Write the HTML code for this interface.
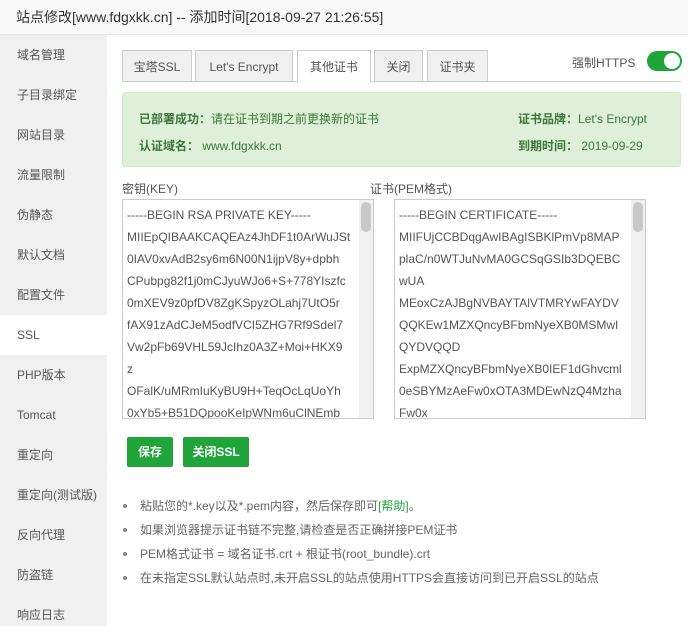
<!DOCTYPE html>
<html><head><meta charset="utf-8"><style>
*{margin:0;padding:0;box-sizing:border-box}
body{width:688px;height:626px;overflow:hidden;background:#fff;font-family:"Liberation Sans","Noto Sans CJK SC",sans-serif;font-size:12px;color:#555;position:relative}
.a{position:absolute;white-space:nowrap}
.title{left:0;top:0;width:688px;height:35px;background:#f8f8f8;border-bottom:1px solid #e8e8e8;font-size:14px;color:#333;line-height:35px;padding-left:16px}
.side{left:0;top:35px;width:107px;height:591px;background:#f0f0f0}
.si{position:absolute;left:0;width:107px;height:40px;line-height:40px;padding-left:17px;font-size:12px;color:#555}
.tab{position:absolute;top:50px;height:32px;line-height:32px;text-align:center;background:#f0f0f0;border:1px solid #ccc;font-size:12px;color:#555}
.ta{position:absolute;top:199px;height:220px;border:1px solid #ccc;overflow:hidden;padding:4px 0 0 4px;font-size:12px;line-height:22px;color:#555;white-space:normal;word-break:break-all}
.sb{position:absolute;right:0;top:0;width:14px;height:218px;background:#f0f0f0}
.sb i{position:absolute;left:2px;top:2px;width:10px;height:30px;background:#c8c8c8;border-radius:5px}
.btn{position:absolute;top:437px;height:30px;line-height:30px;background:#20a53a;color:#fff;text-align:center;font-weight:bold;border-radius:2px}
.li{position:absolute;left:140px;font-size:12px;color:#666}
.li:before{content:"";position:absolute;left:-17px;top:7px;width:4px;height:4px;border-radius:2px;background:#888}
</style></head><body>
<div class="a title">站点修改[www.fdgxkk.cn] -- 添加时间[2018-09-27 21:26:55]</div>
<div class="a side">
<div class="si" style="top:0">域名管理</div>
<div class="si" style="top:40px">子目录绑定</div>
<div class="si" style="top:80px">网站目录</div>
<div class="si" style="top:120px">流量限制</div>
<div class="si" style="top:160px">伪静态</div>
<div class="si" style="top:200px">默认文档</div>
<div class="si" style="top:240px">配置文件</div>
<div class="si" style="top:280px;background:#fff">SSL</div>
<div class="si" style="top:320px">PHP版本</div>
<div class="si" style="top:360px">Tomcat</div>
<div class="si" style="top:400px">重定向</div>
<div class="si" style="top:440px">重定向(测试版)</div>
<div class="si" style="top:480px">反向代理</div>
<div class="si" style="top:520px">防盗链</div>
<div class="si" style="top:560px">响应日志</div>
</div>
<div class="a" style="left:122px;top:81px;width:559px;height:1px;background:#ccc"></div>
<div class="tab" style="left:122px;width:70px">宝塔SSL</div>
<div class="tab" style="left:195px;width:98px">Let's Encrypt</div>
<div class="tab" style="left:297px;width:74px;background:#fff;border-bottom-color:#fff;height:33px">其他证书</div>
<div class="tab" style="left:374px;width:49px">关闭</div>
<div class="tab" style="left:427px;width:61px">证书夹</div>
<div class="a" style="left:572px;top:54px;color:#555">强制HTTPS</div>
<div class="a" style="left:647px;top:51px;width:35px;height:20px;border-radius:10px;background:#20a53a"><div style="position:absolute;right:2px;top:2px;width:16px;height:16px;border-radius:8px;background:#fff"></div></div>
<div class="a" style="left:122px;top:92px;width:559px;height:75px;background:#dff0d8;border:1px solid #d0e9c6;border-radius:3px"></div>
<div class="a" style="left:139px;top:110px;color:#3c763d"><b>已部署成功：</b>请在证书到期之前更换新的证书</div>
<div class="a" style="left:139px;top:137px;color:#3c763d"><b>认证域名：</b> www.fdgxkk.cn</div>
<div class="a" style="left:518px;top:110px;color:#3c763d"><b>证书品牌：</b>Let's Encrypt</div>
<div class="a" style="left:518px;top:137px;color:#3c763d"><b>到期时间：</b> 2019-09-29</div>
<div class="a" style="left:122px;top:180px;color:#555">密钥(KEY)</div>
<div class="a" style="left:370px;top:180px;color:#555">证书(PEM格式)</div>
<div class="ta" style="left:122px;width:252px">-----BEGIN RSA PRIVATE KEY-----<br>MIIEpQIBAAKCAQEAz4JhDF1t0ArWuJSt<br>0IAV0xvAdB2sy6m6N00N1ijpV8y+dpbh<br>CPubpg82f1j0mCJyuWJo6+S+778YIszfc<br>0mXEV9z0pfDV8ZgKSpyzOLahj7UtO5r<br>fAX91zAdCJeM5odfVCI5ZHG7Rf9Sdel7<br>Vw2pFb69VHL59JcIhz0A3Z+Moi+HKX9<br>z<br>OFalK/uMRmIuKyBU9H+TeqOcLqUoYh<br>0xYb5+B51DQpooKeIpWNm6uClNEmb<div class="sb"><i></i></div></div>
<div class="ta" style="left:394px;width:252px">-----BEGIN CERTIFICATE-----<br>MIIFUjCCBDqgAwIBAgISBKlPmVp8MAP<br>plaC/n0WTJuNvMA0GCSqGSIb3DQEBC<br>wUA<br>MEoxCzAJBgNVBAYTAlVTMRYwFAYDV<br>QQKEw1MZXQncyBFbmNyeXB0MSMwI<br>QYDVQQD<br>ExpMZXQncyBFbmNyeXB0IEF1dGhvcml<br>0eSBYMzAeFw0xOTA3MDEwNzQ4Mzha<br>Fw0x<div class="sb"><i></i></div></div>
<div class="btn" style="left:127px;width:46px">保存</div>
<div class="btn" style="left:183px;width:66px">关闭SSL</div>
<div class="li" style="top:497px">粘贴您的*.key以及*.pem内容，然后保存即可<span style="color:#20a53a">[帮助]</span>。</div>
<div class="li" style="top:521px">如果浏览器提示证书链不完整,请检查是否正确拼接PEM证书</div>
<div class="li" style="top:545px">PEM格式证书 = 域名证书.crt + 根证书(root_bundle).crt</div>
<div class="li" style="top:569px">在未指定SSL默认站点时,未开启SSL的站点使用HTTPS会直接访问到已开启SSL的站点</div>
</body></html>
